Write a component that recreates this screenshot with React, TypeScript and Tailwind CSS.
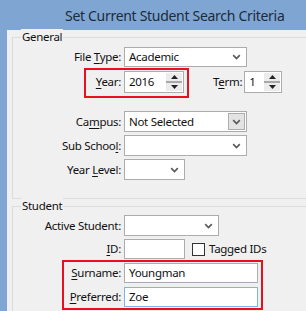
import React from "react";

const Chevron = () => (
  <svg width="9" height="6" viewBox="0 0 9 6">
    <path d="M1.2 1.2L4.5 4.5L7.8 1.2" stroke="#5a5a5a" strokeWidth="1.7" fill="none" />
  </svg>
);

function Combo({ w, text, button, h = "h-[21px]" }: { w: string; text?: string; button?: boolean; h?: string }) {
  return (
    <div className={`flex items-center bg-white border border-[#acacac] ${h} ${w}`}>
      <span className="flex-1 pl-[4px] leading-none whitespace-nowrap">{text}</span>
      {button ? (
        <span className="mr-[1px] h-[17px] w-[17px] border border-[#adadad] bg-[#e3e3e3] flex items-center justify-center">
          <Chevron />
        </span>
      ) : (
        <span className="w-[19px] flex items-center justify-center">
          <Chevron />
        </span>
      )}
    </div>
  );
}

function Spinner({ w, text }: { w: string; text: string }) {
  return (
    <div className={`flex bg-white border border-[#acacac] h-[22px] ${w}`}>
      <span className="flex-1 pl-[4px] flex items-center leading-none">{text}</span>
      <div className="w-[16px] flex flex-col mr-[1px] my-[1px]">
        <div className="flex-1 flex items-center justify-center bg-[#ececec]">
          <svg width="7" height="4" viewBox="0 0 7 4"><path d="M0 4L3.5 0L7 4Z" fill="#222" /></svg>
        </div>
        <div className="h-[2px] bg-[#a8a8a8]" />
        <div className="flex-1 flex items-center justify-center bg-[#ececec]">
          <svg width="7" height="4" viewBox="0 0 7 4"><path d="M0 0L3.5 4L7 0Z" fill="#222" /></svg>
        </div>
      </div>
    </div>
  );
}

const U = ({ children }: { children: React.ReactNode }) => (
  <span className="underline underline-offset-[2px] decoration-[1px]">{children}</span>
);

function Row({ label, children, mt }: { label: React.ReactNode; children: React.ReactNode; mt?: string }) {
  return (
    <div className={`flex items-center gap-[3px] ${mt ?? ""}`}>
      <div className="w-[108px] text-right whitespace-nowrap">{label}</div>
      {children}
    </div>
  );
}

export default function App() {
  return (
    <div className="w-[306px] h-[311px] overflow-hidden bg-[#7fa6d3] flex flex-col font-['Noto_Sans',sans-serif] text-[11.5px] tracking-[-0.3px] text-[#111]">
      <div className="h-[30px] shrink-0 pl-[65px] flex items-center text-[14px] tracking-[-0.3px] text-[#1d2a3a] whitespace-nowrap">
        Set Current Student Search Criteria
      </div>
      <div className="flex-1 ml-[7px] bg-[#f0f0f0] pl-[5px] pt-[7px]">
        {/* General */}
        <div className="relative w-[320px] border border-[#dcdcdc] pt-[9px] pb-[18px]">
          <span className="absolute left-[8px] -top-[9px] px-[1px] bg-[#f0f0f0] leading-[16px]">General</span>
          <Row label={<>File <U>T</U>ype:</>}>
            <Combo w="w-[123px]" h="h-[20px]" text="Academic" />
          </Row>
          <div className="flex items-center mt-[1px]">
            <div className="ml-[71px] w-[105px] h-[30px] border-2 border-[#e8101c] flex items-start pt-[1px] gap-[3px]">
              <div className="w-[35px] h-[22px] flex items-center justify-end"><span><U>Y</U>ear:</span></div>
              <Spinner w="w-[60px]" text="2016" />
            </div>
            <div className="ml-[24px] flex items-center gap-[2px] -mt-[2px]">
              <span>T<U>e</U>rm:</span>
              <Spinner w="w-[38px]" text="1" />
            </div>
          </div>
          <Row label={<>Ca<U>m</U>pus:</>} mt="mt-[13px]">
            <Combo w="w-[123px]" text="Not Selected" button />
          </Row>
          <Row label={<>Sub Schoo<U>l</U>:</>} mt="mt-[3px]">
            <Combo w="w-[123px]" />
          </Row>
          <Row label={<>Year <U>L</U>evel:</>} mt="mt-[3px]">
            <Combo w="w-[61px]" />
          </Row>
        </div>

        {/* Student */}
        <div className="relative w-[320px] border border-[#dcdcdc] mt-[7px] pt-[8px] pb-[20px]">
          <span className="absolute left-[8px] -top-[9px] px-[1px] bg-[#f0f0f0] leading-[16px]">Student</span>
          <Row label="Active Student:">
            <Combo w="w-[95px]" />
          </Row>
          <Row label={<><U>I</U>D:</>} mt="mt-[3px]">
            <div className="w-[61px] h-[20px] bg-white border border-[#acacac]" />
            <div className="ml-[4px] w-[13px] h-[13px] bg-white border border-[#333]" />
            <span className="ml-[1px]">Tagged IDs</span>
          </Row>
          <div className="ml-[49px] mt-[1px] w-[201px] border-2 border-[#e8101c] pt-[1px] pb-[1px] pr-[3px] flex flex-col gap-[4px]">
            <div className="flex items-center gap-[3px]">
              <div className="w-[57px] text-right"><U>S</U>urname:</div>
              <div className="w-[134px] h-[20px] bg-white border border-[#acacac] pl-[4px] flex items-center">Youngman</div>
            </div>
            <div className="flex items-center gap-[3px]">
              <div className="w-[57px] text-right"><U>P</U>referred:</div>
              <div className="w-[134px] h-[20px] bg-white border border-[#7eb4ea] pl-[4px] flex items-center">Zoe</div>
            </div>
          </div>
        </div>
      </div>
    </div>
  );
}
